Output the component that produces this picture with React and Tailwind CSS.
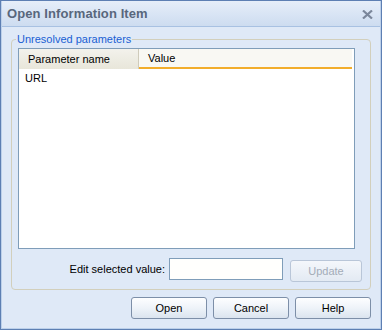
import React, { useState } from "react";

const FONT = "font-['Liberation_Sans',Arial,sans-serif]";

function DlgButton({ children, disabled, className = "" }) {
  return (
    <button
      type="button"
      disabled={disabled}
      className={`h-[22px] rounded-[3px] border text-[11px] leading-none ${
        disabled
          ? "border-[#b9c6d8] bg-gradient-to-b from-[#f4f7fb] to-[#e3eaf3] text-[#a3acb8]"
          : "border-[#7d8fa8] bg-gradient-to-b from-[#fdfeff] via-[#eef3f9] to-[#dbe4ef] text-black"
      } ${className}`}
    >
      {children}
    </button>
  );
}

function App() {
  const [params] = useState([{ name: "URL", value: "" }]);
  const [editValue, setEditValue] = useState("");

  return (
    <div className={`w-[382px] h-[330px] bg-[#5d7fb3] p-px ${FONT}`}>
      <div className="w-full h-full flex flex-col bg-[#dfe9f7] border-l border-r border-b border-[#bcd0ea]">
        {/* title bar */}
        <div className="h-[26px] shrink-0 flex items-center justify-between border-b border-[#a8c1e2] bg-gradient-to-b from-[#e6eef9] to-[#cddcf0] pl-[5px] pr-[7px]">
          <span className="text-[13px] font-bold text-[#58677c] leading-none tracking-[0.1px]">
            Open Information Item
          </span>
          <svg width="11" height="9" viewBox="0 0 11 9" className="mt-[1px]">
            <path d="M1 0.5 L10 8.5 M10 0.5 L1 8.5" stroke="#7b879b" strokeWidth="2.2" />
          </svg>
        </div>

        <div className="flex-1 flex flex-col pl-[9px]">
          {/* group box */}
          <fieldset className="mt-[5px] w-[360px] h-[258px] border border-[#d2cfbc] rounded-[4px] pl-[6px] pt-[2px] pb-0 flex flex-col">
            <legend className="ml-[-2px] px-[1px] text-[11px] leading-[14px] text-[#1a5fd3]">
              Unresolved parameters
            </legend>

            <div className="w-[337px] h-[201px] border border-[#7f9db9] bg-white flex flex-col">
              <div className="h-[20px] flex text-[11px] text-black">
                <div className="w-[120px] flex items-center pl-[9px] bg-gradient-to-b from-[#f3f2ec] to-[#e8e6da] border-r border-[#cfcbbb]">
                  Parameter name
                </div>
                <div className="flex-1 flex items-center pl-[9px] bg-[#f9f8f3] border-b-2 border-[#f2ad2b] mr-[2px]">
                  Value
                </div>
              </div>
              {params.map((p) => (
                <div key={p.name} className="h-[16px] mt-[1px] flex items-center pl-[6px] text-[11px] text-black">
                  {p.name}
                </div>
              ))}
            </div>

            <div className="mt-[9px] flex items-start text-[11px] text-black">
              <span className="w-[151px] h-[22px] flex items-center justify-end pr-[4px]">
                Edit selected value:
              </span>
              <input
                type="text"
                value={editValue}
                onChange={(e) => setEditValue(e.target.value)}
                className="w-[114px] h-[22px] border border-[#7f9db9] bg-[#fffffd] outline-none px-[2px] text-[11px]"
              />
              <DlgButton disabled className="w-[72px] ml-[7px] mt-[2px] h-[21px]">
                Update
              </DlgButton>
            </div>
          </fieldset>

          {/* dialog buttons */}
          <div className="mt-[7px] w-[360px] flex justify-end gap-[6px]">
            <DlgButton className="w-[76px]">Open</DlgButton>
            <DlgButton className="w-[76px]">Cancel</DlgButton>
            <DlgButton className="w-[76px]">Help</DlgButton>
          </div>
        </div>
      </div>
    </div>
  );
}

export default App;
